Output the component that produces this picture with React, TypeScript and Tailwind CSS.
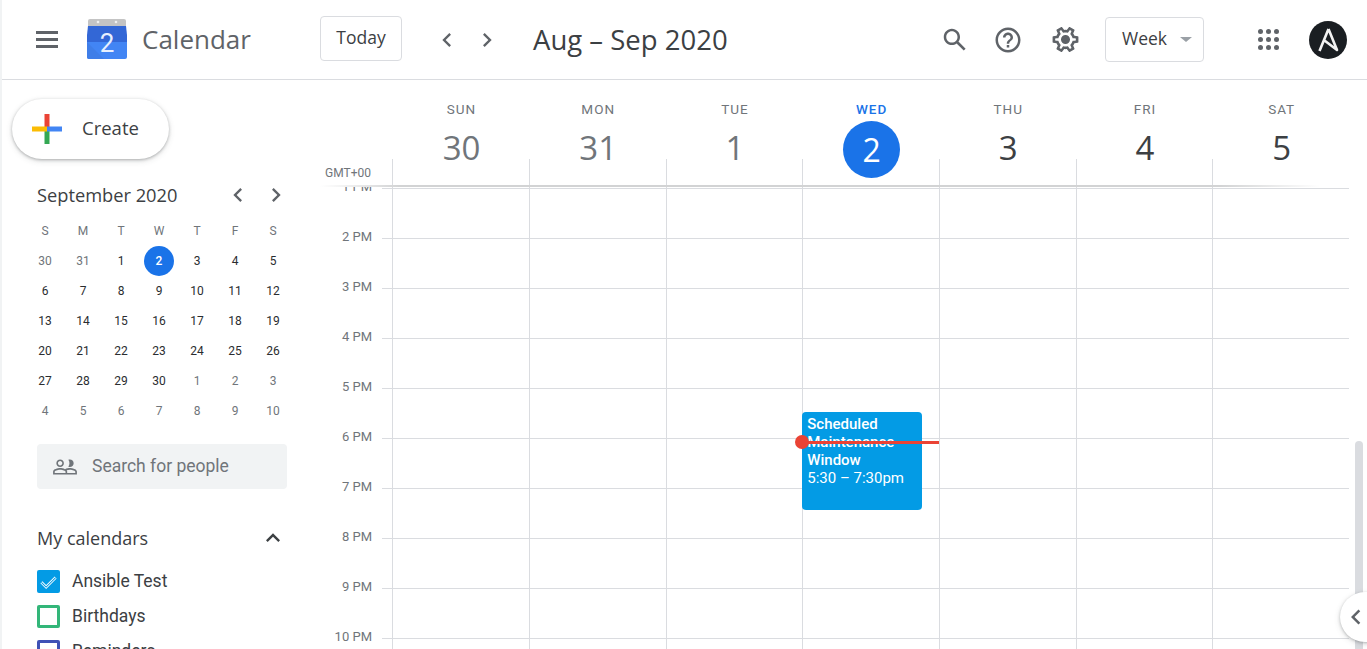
const HEAD = '"Open Sans","Noto Sans",sans-serif';
const days = [
  { d: 'SUN', n: '30', muted: true },
  { d: 'MON', n: '31', muted: true },
  { d: 'TUE', n: '1', muted: true },
  { d: 'WED', n: '2', today: true },
  { d: 'THU', n: '3' },
  { d: 'FRI', n: '4' },
  { d: 'SAT', n: '5' },
];
const hours = ['1 PM', '2 PM', '3 PM', '4 PM', '5 PM', '6 PM', '7 PM', '8 PM', '9 PM', '10 PM'];
const mini = [
  ['30', '31', '1', '2', '3', '4', '5'],
  ['6', '7', '8', '9', '10', '11', '12'],
  ['13', '14', '15', '16', '17', '18', '19'],
  ['20', '21', '22', '23', '24', '25', '26'],
  ['27', '28', '29', '30', '1', '2', '3'],
  ['4', '5', '6', '7', '8', '9', '10'],
];

function Mat({ d, size = 30, className = '' }: { d: string; size?: number; className?: string }) {
  return (
    <svg width={size} height={size} viewBox="0 0 24 24" fill="#5f6368" className={className}>
      <path d={d} />
    </svg>
  );
}
function Chev({ left, size = 28, color = '#5f6368' }: { left?: boolean; size?: number; color?: string }) {
  return (
    <svg width={size} height={size} viewBox="0 0 24 24" fill={color}>
      <path d={left ? 'M15.41 7.41 14 6l-6 6 6 6 1.41-1.41L10.83 12z' : 'M10 6 8.59 7.41 13.17 12l-4.58 4.59L10 18l6-6z'} />
    </svg>
  );
}

function Logo() {
  return (
    <svg width="40" height="40" viewBox="0 0 40 40" className="shrink-0">
      <path d="M1 8V2a2 2 0 0 1 2-2h34a2 2 0 0 1 2 2v6z" fill="#c4c4c4" />
      <circle cx="11" cy="3" r="1.3" fill="#f1f1f1" />
      <circle cx="29" cy="3" r="1.3" fill="#f1f1f1" />
      <path d="M1 7h38l1 9v8H0v-8z" fill="#3367d6" />
      <path d="M0 23h40v15a2 2 0 0 1-2 2H2a2 2 0 0 1-2-2z" fill="#4285f4" />
      <path d="M0 23l17 17H2a2 2 0 0 1-2-2z" fill="#3f7ee8" />
      <text x="20" y="33" textAnchor="middle" fontFamily="Roboto, sans-serif" fontSize="26" fill="#e8f0fe">2</text>
    </svg>
  );
}

function Header() {
  return (
    <header className="flex h-[80px] items-center border-b border-[#dadce0] bg-white">
      <div className="flex w-[318px] shrink-0 items-center">
        <div className="mb-[1px] ml-[34px] flex w-[22px] flex-col gap-[4px]">
          <span className="h-[3px] bg-[#5f6368]" />
          <span className="h-[3px] bg-[#5f6368]" />
          <span className="h-[3px] bg-[#5f6368]" />
        </div>
        <div className="mb-[2px] ml-[29px]"><Logo /></div>
        <span className="ml-[15px] text-[26px] text-[#5f6368]" style={{ fontFamily: HEAD }}>Calendar</span>
      </div>
      <button className="mb-[2px] flex h-[45px] w-[82px] items-center justify-center rounded border border-[#dadce0] pb-[3px] text-[17.5px] font-medium text-[#3c4043]" style={{ fontFamily: HEAD }}>Today</button>
      <div className="ml-[31px] flex gap-[12px]">
        <Chev left />
        <Chev />
      </div>
      <span className="ml-[32px] text-[27.5px] text-[#3c4043]" style={{ fontFamily: HEAD }}>Aug – Sep 2020</span>
      <div className="ml-auto flex items-center">
        <Mat d="M20.49 19l-5.73-5.73C15.53 12.2 16 10.91 16 9.5 16 5.91 13.09 3 9.5 3S3 5.91 3 9.5 5.91 16 9.5 16c1.41 0 2.7-.47 3.77-1.24L19 20.49 20.49 19zM5 9.5C5 7.01 7.01 5 9.5 5S14 7.01 14 9.5 11.99 14 9.5 14 5 11.99 5 9.5z" />
        <Mat className="ml-[23px]" d="M11 18h2v-2h-2v2zm1-16C6.48 2 2 6.48 2 12s4.48 10 10 10 10-4.48 10-10S17.52 2 12 2zm0 18c-4.41 0-8-3.59-8-8s3.59-8 8-8 8 3.59 8 8-3.59 8-8 8zm0-14c-2.21 0-4 1.79-4 4h2c0-1.1.9-2 2-2s2 .9 2 2c0 2-3 1.75-3 5h2c0-2.25 3-2.5 3-5 0-2.21-1.79-4-4-4z" />
        <Mat className="ml-[27px] rotate-90" size={31} d="M19.43 12.98c.04-.32.07-.64.07-.98 0-.34-.03-.66-.07-.98l2.11-1.65c.19-.15.24-.42.12-.64l-2-3.46c-.09-.16-.26-.25-.44-.25-.06 0-.12.01-.17.03l-2.49 1c-.52-.4-1.08-.73-1.69-.98l-.38-2.65C14.46 2.18 14.25 2 14 2h-4c-.25 0-.46.18-.49.42l-.38 2.65c-.61.25-1.17.59-1.69.98l-2.49-1c-.06-.02-.12-.03-.18-.03-.17 0-.34.09-.43.25l-2 3.46c-.13.22-.07.49.12.64l2.11 1.65c-.04.32-.07.65-.07.98 0 .33.03.66.07.98l-2.11 1.65c-.19.15-.24.42-.12.64l2 3.46c.09.16.26.25.44.25.06 0 .12-.01.17-.03l2.49-1c.52.4 1.08.73 1.69.98l.38 2.65c.03.24.24.42.49.42h4c.25 0 .46-.18.49-.42l.38-2.65c.61-.25 1.17-.59 1.69-.98l2.49 1c.06.02.12.03.18.03.17 0 .34-.09.43-.25l2-3.46c.12-.22.07-.49-.12-.64l-2.11-1.65zm-1.98-1.71c.04.31.05.52.05.73 0 .21-.02.43-.05.73l-.14 1.13.89.7 1.08.84-.7 1.21-1.27-.51-1.04-.42-.9.68c-.43.32-.84.56-1.25.73l-1.06.43-.16 1.13-.2 1.35h-1.4l-.19-1.35-.16-1.13-1.06-.43c-.43-.18-.83-.41-1.23-.71l-.91-.7-1.06.43-1.27.51-.7-1.21 1.08-.84.89-.7-.14-1.13c-.03-.31-.05-.54-.05-.74s.02-.43.05-.73l.14-1.13-.89-.7-1.08-.84.7-1.21 1.27.51 1.04.42.9-.68c.43-.32.84-.56 1.25-.73l1.06-.43.16-1.13.2-1.35h1.39l.19 1.35.16 1.13 1.06.43c.43.18.83.41 1.23.71l.91.7 1.06-.43 1.27-.51.7 1.21-1.07.85-.89.7.14 1.13zM12 8.5a3.5 3.5 0 1 0 0 7 3.5 3.5 0 0 0 0-7z" />
        <button className="ml-[24px] flex h-[45px] w-[99px] items-center rounded border border-[#dadce0] pb-[3px] pl-[16px] text-[17.5px] font-medium text-[#3c4043]" style={{ fontFamily: HEAD }}>
          Week
          <span className="ml-[13px] mt-[3px] h-0 w-0 border-x-[6px] border-t-[5px] border-x-transparent border-t-[#9aa0a6]" />
        </button>
        <div className="ml-[54px] grid grid-cols-3 gap-[3px]">
          {Array.from({ length: 9 }).map((_, i) => (
            <span key={i} className="h-[5px] w-[5px] rounded-full bg-[#5f6368]" />
          ))}
        </div>
        <svg width="38" height="38" viewBox="0 0 38 38" className="ml-[30px] mr-[20px]">
          <circle cx="19" cy="19" r="19" fill="#1a1e22" />
          <path d="M19.5 8 10.5 30M19.5 8l8.5 21-12.5-9.5" fill="none" stroke="#f2f2f2" strokeWidth="2.6" strokeLinejoin="round" />
        </svg>
      </div>
    </header>
  );
}

function Sidebar() {
  return (
    <aside className="flex w-[318px] shrink-0 flex-col overflow-hidden bg-white" style={{ fontFamily: 'Roboto, sans-serif' }}>
      <button className="ml-[10px] mt-[19px] flex h-[60px] w-[157px] shrink-0 items-center rounded-full bg-white shadow-[0_1px_3px_rgba(60,64,67,0.35),0_2px_6px_rgba(60,64,67,0.15)]">
        <svg width="32" height="32" viewBox="0 0 32 32" className="ml-[19px]">
          <rect x="13.5" y="1" width="5" height="15" fill="#ea4335" />
          <rect x="13.5" y="16" width="5" height="15" fill="#34a853" />
          <rect x="1" y="13.5" width="15" height="5" fill="#fbbc04" />
          <rect x="16" y="13.5" width="15" height="5" fill="#4285f4" />
        </svg>
        <span className="mb-[2px] ml-[19px] text-[18.5px] font-medium text-[#3c4043]" style={{ fontFamily: HEAD }}>Create</span>
      </button>

      <div className="ml-[35px] mt-[22px] flex h-[28px] w-[253px] shrink-0 items-center justify-between">
        <span className="text-[18.25px] font-medium text-[#3c4043]" style={{ fontFamily: HEAD }}>September 2020</span>
        <div className="flex gap-[10px]">
          <Chev left />
          <Chev />
        </div>
      </div>

      <div className="ml-[24px] mt-[7px] grid w-[266px] shrink-0 grid-cols-7 text-center text-[12px] leading-[30px]">
        {['S', 'M', 'T', 'W', 'T', 'F', 'S'].map((d, i) => (
          <span key={i} className="text-[#70757a]">{d}</span>
        ))}
        {mini.flatMap((row, r) =>
          row.map((n, c) => {
            const muted = (r === 0 && c < 2) || r === 5 || (r === 4 && c > 3);
            const sel = r === 0 && c === 3;
            return (
              <span key={`${r}-${c}`} className="flex h-[30px] items-center justify-center">
                <span className={sel ? 'flex h-[30px] w-[30px] items-center justify-center rounded-full bg-[#1a73e8] font-medium text-white' : muted ? 'text-[#70757a]' : 'text-[#2a2d30]'}>{n}</span>
              </span>
            );
          })
        )}
      </div>

      <div className="ml-[35px] mt-[18px] flex h-[45px] w-[250px] shrink-0 items-center rounded bg-[#f1f3f4]">
        <svg width="26" height="26" viewBox="0 0 24 24" fill="#70757a" className="ml-[15px]">
          <path fillRule="evenodd" d="M16.5 13c-1.2 0-3.07.34-4.5 1-1.43-.67-3.3-1-4.5-1C5.33 13 1 14.08 1 16.25V19h22v-2.75c0-2.17-4.33-3.25-6.5-3.25zm-4 4.5h-10v-1.25c0-.54 2.56-1.75 5-1.75s5 1.21 5 1.75v1.25zm9 0H14v-1.25c0-.46-.2-.86-.52-1.22.88-.3 1.96-.53 3.02-.53 2.44 0 5 1.21 5 1.75v1.25zM7.5 12c1.93 0 3.5-1.57 3.5-3.5S9.43 5 7.5 5 4 6.57 4 8.5 5.57 12 7.5 12zm0-5.5c1.1 0 2 .9 2 2s-.9 2-2 2-2-.9-2-2 .9-2 2-2zm9 5.5c1.93 0 3.5-1.57 3.5-3.5S18.43 5 16.5 5c-.5 0-1 .1-1.4.3.6.9 1 2 1 3.2s-.4 2.3-1 3.2c.4.2.9.3 1.4.3z" />
        </svg>
        <span className="ml-[14px] text-[17.5px] text-[#70757a]">Search for people</span>
      </div>

      <div className="ml-[35px] mt-[35px] flex h-[28px] w-[250px] shrink-0 items-center justify-between">
        <span className="text-[18px] font-medium text-[#3c4043]" style={{ fontFamily: HEAD }}>My calendars</span>
        <svg width="28" height="28" viewBox="0 0 24 24" fill="#3c4043"><path d="M12 8 6 14l1.41 1.41L12 10.83l4.59 4.58L18 14z" /></svg>
      </div>

      <div className="ml-[35px] mt-[18px] flex shrink-0 flex-col gap-[12px] text-[17.5px] leading-[23px] text-[#3c4043]">
        <div className="flex items-center gap-[12px]">
          <span className="flex h-[23px] w-[23px] items-center justify-center rounded-[2px] bg-[#039be5]">
            <svg width="19" height="19" viewBox="0 0 24 24" fill="none">
              <path d="m3 13 6 6L21 7" stroke="#fff" strokeWidth="3.4" />
              <path d="m3 13 6 6L21 7" stroke="#039be5" strokeWidth="1.3" />
            </svg>
          </span>
          Ansible Test
        </div>
        <div className="flex items-center gap-[12px]">
          <span className="h-[23px] w-[23px] rounded-[2px] border-[3px] border-[#33b679]" />
          Birthdays
        </div>
        <div className="flex items-center gap-[12px]">
          <span className="h-[23px] w-[23px] rounded-[2px] border-[3px] border-[#3f51b5]" />
          Reminders
        </div>
      </div>
    </aside>
  );
}

function Main() {
  return (
    <main className="relative flex min-w-0 flex-1 flex-col overflow-hidden bg-white" style={{ fontFamily: 'Roboto, sans-serif' }}>
      <div className="flex h-[105px] shrink-0">
        <div className="relative w-[72.2px] shrink-0">
          <span className="absolute bottom-[5px] left-[5px] text-[12px] leading-[14px] text-[#70757a]">GMT+00</span>
        </div>
        {days.map((x) => (
          <div key={x.d} className="relative flex w-[136.7px] shrink-0 flex-col items-center pl-[2px]">
            <span className="absolute bottom-0 left-0 h-[26px] w-px bg-[#dadce0]" />
            <span className={`mt-[22px] text-[13.5px] leading-[15px] tracking-[1px] ${x.today ? 'font-medium text-[#1a73e8]' : 'text-[#70757a]'}`}>{x.d}</span>
            {x.today ? (
              <span className="mt-[4px] flex h-[57px] w-[57px] items-center justify-center rounded-full bg-[#1a73e8] text-[32px] text-white" style={{ fontFamily: HEAD }}>{x.n}</span>
            ) : (
              <span className={`mt-[2px] flex h-[57px] items-center text-[33px] ${x.muted ? 'text-[#70757a]' : 'text-[#3c4043]'}`} style={{ fontFamily: HEAD }}>{x.n}</span>
            )}
          </div>
        ))}
      </div>
      <div className="h-[2px] w-[1000px] shrink-0 bg-[linear-gradient(to_right,#fff,#d2d3d4_8%,#d2d3d4_90%,#fff)]" />

      <div className="flex min-h-0 flex-1 overflow-hidden">
        <div className="w-[72.2px] shrink-0 pt-px">
          {hours.map((h) => (
            <div key={h} className="flex h-[50px] items-start">
              <span className="w-[62px] -translate-y-[11px] pr-[10px] text-right text-[13px] leading-[20px] text-[#70757a]">{h}</span>
              <span className="h-px w-[10px] bg-[#dadce0]" />
            </div>
          ))}
        </div>
        {days.map((x) => (
          <div key={x.d} className="relative w-[136.7px] shrink-0 border-l border-[#dadce0] pt-px">
            {hours.map((h) => (
              <div key={h} className="h-[50px] border-t border-[#dadce0]" />
            ))}
            {x.today && (
              <>
                <div className="absolute left-[-1px] top-[225px] h-[98px] w-[120px] rounded bg-[#039be5] px-[5px] pt-[3px] text-[15px] leading-[18px] text-white">
                  <div className="font-medium">Scheduled Maintenance Window</div>
                  <div>5:30 – 7:30pm</div>
                </div>
                <div className="absolute left-0 top-[254px] h-[3px] w-full bg-[#ea4335]" />
                <div className="absolute left-[-8px] top-[248px] h-[14px] w-[14px] rounded-full bg-[#ea4335]" />
              </>
            )}
          </div>
        ))}
      </div>

      <div className="absolute right-[4px] top-[361px] h-[300px] w-[8px] rounded-full bg-[#dadce0]" />
      <button className="absolute bottom-[7px] left-[1020px] flex h-[50px] w-[50px] items-center rounded-full bg-white pl-[1px] shadow-[0_1px_3px_rgba(60,64,67,0.3),0_2px_6px_rgba(60,64,67,0.15)]">
        <Chev left size={30} color="#5f6368" />
      </button>
    </main>
  );
}

export default function App() {
  return (
    <div className="flex h-screen w-full flex-col overflow-hidden border-l-2 border-[#f1f3f4] bg-white">
      <Header />
      <div className="flex min-h-0 flex-1">
        <Sidebar />
        <Main />
      </div>
    </div>
  );
}
